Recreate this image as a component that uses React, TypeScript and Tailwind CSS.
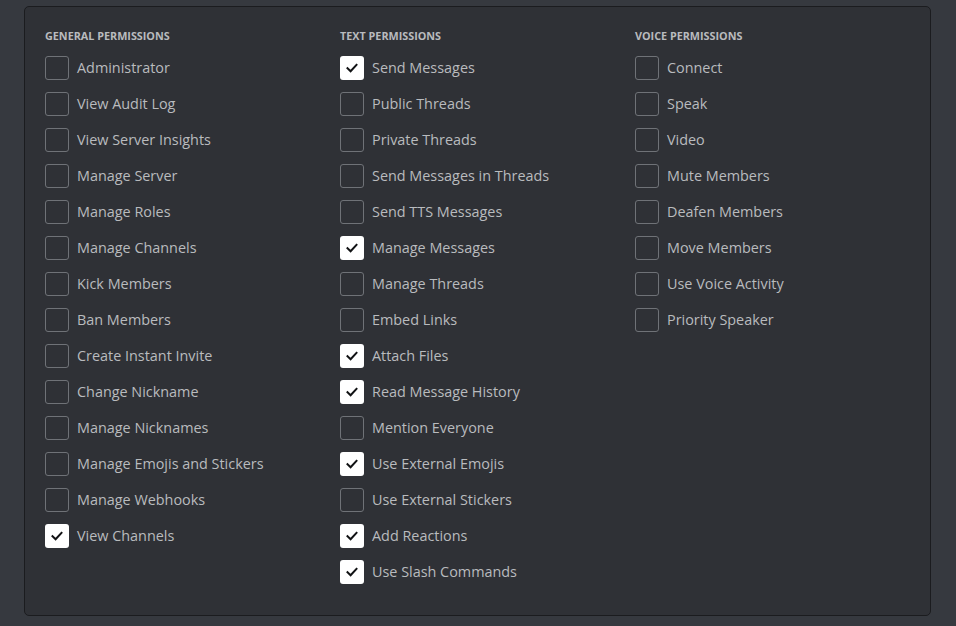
import React from "react";

type Perm = [string, boolean];

const cols: { title: string; items: Perm[] }[] = [
  {
    title: "General Permissions",
    items: [
      ["Administrator", false],
      ["View Audit Log", false],
      ["View Server Insights", false],
      ["Manage Server", false],
      ["Manage Roles", false],
      ["Manage Channels", false],
      ["Kick Members", false],
      ["Ban Members", false],
      ["Create Instant Invite", false],
      ["Change Nickname", false],
      ["Manage Nicknames", false],
      ["Manage Emojis and Stickers", false],
      ["Manage Webhooks", false],
      ["View Channels", true],
    ],
  },
  {
    title: "Text Permissions",
    items: [
      ["Send Messages", true],
      ["Public Threads", false],
      ["Private Threads", false],
      ["Send Messages in Threads", false],
      ["Send TTS Messages", false],
      ["Manage Messages", true],
      ["Manage Threads", false],
      ["Embed Links", false],
      ["Attach Files", true],
      ["Read Message History", true],
      ["Mention Everyone", false],
      ["Use External Emojis", true],
      ["Use External Stickers", false],
      ["Add Reactions", true],
      ["Use Slash Commands", true],
    ],
  },
  {
    title: "Voice Permissions",
    items: [
      ["Connect", false],
      ["Speak", false],
      ["Video", false],
      ["Mute Members", false],
      ["Deafen Members", false],
      ["Move Members", false],
      ["Use Voice Activity", false],
      ["Priority Speaker", false],
    ],
  },
];

function Box({ checked }: { checked: boolean }) {
  if (checked) {
    return (
      <div className="flex h-[24px] w-[24px] shrink-0 items-center justify-center rounded-[3px] bg-white">
        <svg width="14" height="14" viewBox="0 0 14 14" fill="none">
          <path d="M2.5 7.2 L5.6 10.2 L11.5 3.8" stroke="#111214" strokeWidth="2" strokeLinecap="square" />
        </svg>
      </div>
    );
  }
  return <div className="h-[24px] w-[24px] shrink-0 rounded-[3px] border border-[#6f7277]" />;
}

export default function App() {
  return (
    <div
      className="h-[626px] w-[956px] overflow-hidden bg-[#36393f] pl-[24px] pt-[6px]"
      style={{ fontFamily: '"Open Sans", "Noto Sans", sans-serif' }}
    >
      <div className="flex h-[610px] w-[907px] rounded-[5px] border border-[#1b1c1f] bg-[#2f3136] pl-[20px] pt-[21px]">
        {cols.map((c) => (
          <div key={c.title} className="flex w-[295px] flex-col">
            <div className="mb-[12px] h-[16px] text-[10.8px] font-bold uppercase leading-[16px] text-[#b9bbbe]">
              {c.title}
            </div>
            <div className="flex flex-col gap-[12px]">
              {c.items.map(([name, checked]) => (
                <div key={name} className="flex h-[24px] items-center gap-[8px]">
                  <Box checked={checked} />
                  <span className="text-[14.4px] leading-[20px] text-[#b9bbbe]">{name}</span>
                </div>
              ))}
            </div>
          </div>
        ))}
      </div>
    </div>
  );
}
